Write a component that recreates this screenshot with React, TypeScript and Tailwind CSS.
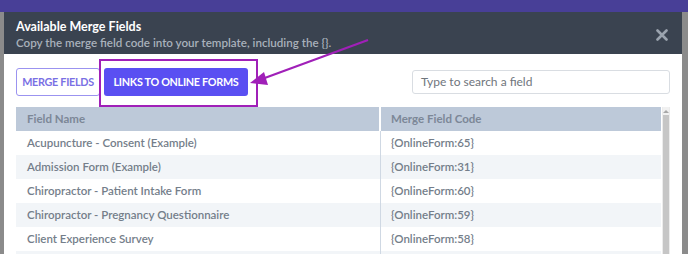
import React from 'react';

const rows = [
	{ name: 'Acupuncture - Consent (Example)', code: '{OnlineForm:65}' },
	{ name: 'Admission Form (Example)', code: '{OnlineForm:31}' },
	{ name: 'Chiropractor - Patient Intake Form', code: '{OnlineForm:60}' },
	{ name: 'Chiropractor - Pregnancy Questionnaire', code: '{OnlineForm:59}' },
	{ name: 'Client Experience Survey', code: '{OnlineForm:58}' },
];

export default function App() {
	return (
		<div
			className="relative w-[688px] h-[254px] overflow-hidden bg-[#8b8b8b]"
			style={{ fontFamily: 'Lato, "Open Sans", sans-serif' }}
		>
			<div className="h-[12px] bg-[#483f97]" />
			<div className="flex">
				<div className="w-[4px] shrink-0" />
				<div className="w-[678px] shrink-0">
					{/* header */}
					<div className="relative h-[42px] bg-[#3a4350] px-[12px] pt-[7px]">
						<div className="text-[12.5px] leading-[16px] font-bold text-white">Available Merge Fields</div>
						<div className="text-[11.6px] leading-[16px] font-semibold text-[#a9b1bb]">
							Copy the merge field code into your template, including the {'{}'}.
						</div>
						<svg className="absolute right-[14px] top-[17px]" width="12" height="12" viewBox="0 0 12 12">
							<path d="M1.5 1.5 L10.5 10.5 M10.5 1.5 L1.5 10.5" stroke="#9aa3ae" strokeWidth="2.6" strokeLinecap="round" />
						</svg>
					</div>
					{/* body */}
					<div className="bg-white px-[12px] pt-[14px] h-[200px]">
						<div className="flex items-center justify-between">
							<div className="flex gap-[4px]">
								<button className="w-[84px] h-[28px] rounded-[3px] border border-[#9b93f0] text-[10.8px] tracking-[-0.3px] font-bold text-[#7a70e4] bg-white">
									MERGE FIELDS
								</button>
								<button className="w-[144px] h-[28px] rounded-[3px] bg-[#5a4ff2] text-[10.8px] tracking-[-0.3px] font-bold text-white">
									LINKS TO ONLINE FORMS
								</button>
							</div>
							<div className="w-[258px] h-[24px] rounded-[3px] border border-[#d9dde2] px-[8px] flex items-center text-[12px] text-[#6f757c]">
								Type to search a field
							</div>
						</div>
						<div className="mt-[11px] flex">
							<div className="w-[646px]">
								<div className="flex h-[24px] bg-[#bdc9d9] text-[11.5px] font-bold text-[#7c8797]">
									<div className="w-[365px] pl-[11px] flex items-center border-r-2 border-white">Field Name</div>
									<div className="flex-1 pl-[10px] flex items-center">Merge Field Code</div>
								</div>
								{rows.map((r, i) => (
									<div
										key={r.code}
										className={`flex h-[24px] text-[11.5px] font-semibold text-[#747e8a] ${i % 2 ? 'bg-[#f2f5f8]' : 'bg-white'}`}
									>
										<div className="w-[365px] pl-[11px] flex items-center border-r border-[#cfd8e3]">{r.name}</div>
										<div className="flex-1 pl-[10px] flex items-center">{r.code}</div>
									</div>
								))}
								<div className="flex h-[24px] bg-[#f2f5f8]">
									<div className="w-[365px] border-r border-[#cfd8e3]" />
								</div>
							</div>
							<div className="w-[8px] ml-[1px] bg-[#ececec] flex flex-col items-center">
								<div className="w-[6px] h-[8px] flex items-center justify-center bg-[#f1f1f1]">
									<div className="w-0 h-0 border-l-[3px] border-r-[3px] border-b-[3px] border-l-transparent border-r-transparent border-b-[#a8a8a8]" />
								</div>
								<div className="w-[6px] flex-1 bg-[#c6c6c6]" />
							</div>
						</div>
					</div>
				</div>
			</div>
			{/* annotation */}
			<div className="absolute left-[99px] top-[59px] w-[159px] h-[48px] border-2 border-[#a020b8]" />
			<svg className="absolute left-0 top-0" width="688" height="254" viewBox="0 0 688 254">
				<line x1="368" y1="40" x2="262" y2="79" stroke="#a020b8" strokeWidth="2.2" />
				<polygon points="250,83 264,72 268,85" fill="#a020b8" />
			</svg>
		</div>
	);
}
